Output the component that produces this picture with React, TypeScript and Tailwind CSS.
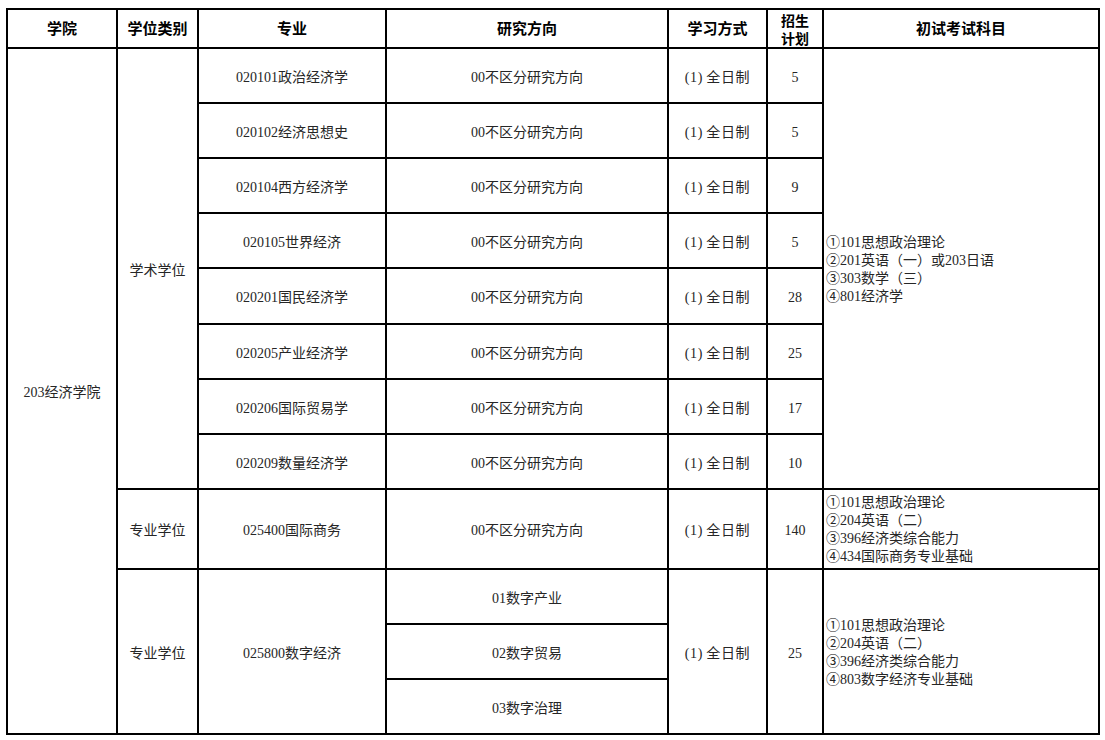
const body = "font-['Liberation_Serif','Noto_Sans_CJK_SC',serif] text-[14px] text-[#262626]"

const academic = [
  ['020101政治经济学', '5'],
  ['020102经济思想史', '5'],
  ['020104西方经济学', '9'],
  ['020105世界经济', '5'],
  ['020201国民经济学', '28'],
  ['020205产业经济学', '25'],
  ['020206国际贸易学', '17'],
  ['020209数量经济学', '10'],
]

function Subjects({ lines }: { lines: string[] }) {
  return (
    <div className="flex flex-col text-left leading-[18px] pl-[2px]">
      {lines.map((l) => (
        <span key={l}>{l}</span>
      ))}
    </div>
  )
}

export default function App() {
  const cell = 'border-2 border-black text-center align-middle p-0'
  const td = `${cell} pt-[3px]`
  const mode = <span className="tracking-[0.6px]">(1)&thinsp;全日制</span>
  return (
    <div className="w-[1105px] h-[740px] bg-white pt-[8px] pl-[6px]">
      <table className={`border-collapse table-fixed w-[1094px] ${body}`}>
        <colgroup>
          <col className="w-[110px]" />
          <col className="w-[81px]" />
          <col className="w-[188px]" />
          <col className="w-[282px]" />
          <col className="w-[99px]" />
          <col className="w-[56px]" />
          <col className="w-[276px]" />
        </colgroup>
        <thead>
          <tr className="h-[39px] font-['Noto_Sans_CJK_SC',sans-serif] font-bold text-[15px] text-black">
            <th className={cell}>学院</th>
            <th className={cell}>学位类别</th>
            <th className={cell}>专业</th>
            <th className={cell}>研究方向</th>
            <th className={cell}>学习方式</th>
            <th className={`${cell} text-[14px] leading-[18px]`}>
              <div className="flex flex-col items-center">
                <span>招生</span>
                <span>计划</span>
              </div>
            </th>
            <th className={cell}>初试考试科目</th>
          </tr>
        </thead>
        <tbody>
          {academic.map(([major, num], i) => (
            <tr key={major} className={i === 4 ? 'h-[56px]' : 'h-[55px]'}>
              {i === 0 && (
                <td rowSpan={13} className={td}>
                  203经济学院
                </td>
              )}
              {i === 0 && (
                <td rowSpan={8} className={td}>
                  学术学位
                </td>
              )}
              <td className={td}>{major}</td>
              <td className={td}>00不区分研究方向</td>
              <td className={td}>{mode}</td>
              <td className={td}>{num}</td>
              {i === 0 && (
                <td rowSpan={8} className={`${cell} pt-[2px]`}>
                  <Subjects
                    lines={['①101思想政治理论', '②201英语（一）或203日语', '③303数学（三）', '④801经济学']}
                  />
                </td>
              )}
            </tr>
          ))}
          <tr className="h-[80px]">
            <td className={td}>专业学位</td>
            <td className={td}>025400国际商务</td>
            <td className={td}>00不区分研究方向</td>
            <td className={td}>{mode}</td>
            <td className={td}>140</td>
            <td className={`${cell} pt-[2px]`}>
              <Subjects lines={['①101思想政治理论', '②204英语（二）', '③396经济类综合能力', '④434国际商务专业基础']} />
            </td>
          </tr>
          {['01数字产业', '02数字贸易', '03数字治理'].map((d, i) => (
            <tr key={d} className="h-[55px]">
              {i === 0 && (
                <>
                  <td rowSpan={3} className={td}>
                    专业学位
                  </td>
                  <td rowSpan={3} className={td}>
                    025800数字经济
                  </td>
                </>
              )}
              <td className={td}>{d}</td>
              {i === 0 && (
                <>
                  <td rowSpan={3} className={td}>
                    {mode}
                  </td>
                  <td rowSpan={3} className={td}>
                    25
                  </td>
                  <td rowSpan={3} className={`${cell} pt-[2px]`}>
                    <Subjects lines={['①101思想政治理论', '②204英语（二）', '③396经济类综合能力', '④803数字经济专业基础']} />
                  </td>
                </>
              )}
            </tr>
          ))}
        </tbody>
      </table>
    </div>
  )
}
